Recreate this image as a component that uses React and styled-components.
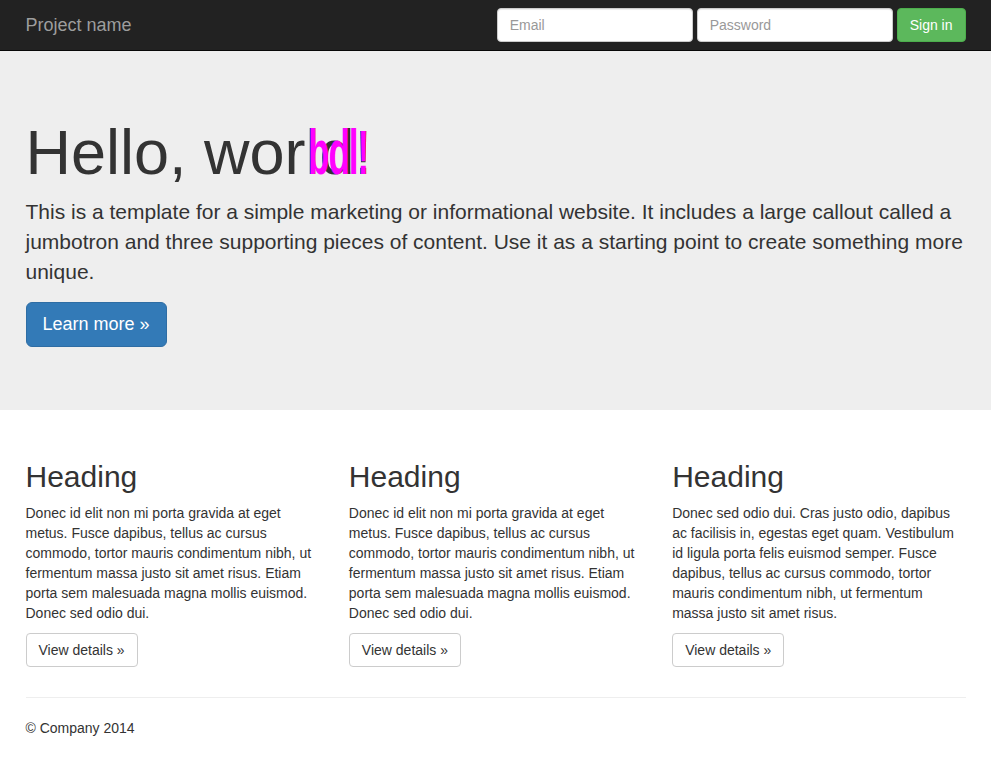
import React from "react";
import styled, { createGlobalStyle } from "styled-components";

const GlobalStyle = createGlobalStyle`
  * { box-sizing: border-box; }
  body {
    margin: 0;
    font-family: "Liberation Sans", Arial, sans-serif;
    font-size: 14px;
    line-height: 1.42857143;
    color: #333;
    background: #fff;
  }
`;

const Navbar = styled.nav`
  height: 51px;
  background: #222;
  border-bottom: 1px solid #080808;
`;

const Container = styled.div`
  max-width: 970px;
  margin: 0 auto;
  padding: 0 15px;
`;

const NavInner = styled(Container)`
  display: flex;
  align-items: center;
  justify-content: space-between;
  height: 50px;
`;

const Brand = styled.a`
  font-size: 18px;
  line-height: 20px;
  color: #9d9d9d;
  text-decoration: none;
`;

const SignInForm = styled.form`
  display: flex;
  gap: 4px;
`;

const Input = styled.input`
  width: 196px;
  height: 34px;
  padding: 6px 12px;
  font-family: inherit;
  font-size: 14px;
  color: #555;
  background: #fff;
  border: 1px solid #ccc;
  border-radius: 4px;
  box-shadow: inset 0 1px 1px rgba(0, 0, 0, 0.075);
  &::placeholder { color: #999; }
`;

const Button = styled.button`
  font-family: inherit;
  font-size: ${({ $lg }) => ($lg ? "18px" : "14px")};
  line-height: ${({ $lg }) => ($lg ? "23px" : "20px")};
  padding: ${({ $lg }) => ($lg ? "10px 16px" : "6px 12px")};
  border-radius: ${({ $lg }) => ($lg ? "6px" : "4px")};
  border: 1px solid;
  cursor: pointer;
  ${({ $variant }) =>
    $variant === "primary"
      ? "color:#fff;background:#337ab7;border-color:#2e6da4;"
      : $variant === "success"
      ? "color:#fff;background:#5cb85c;border-color:#4cae4c;"
      : "color:#333;background:#fff;border-color:#ccc;"}
`;

const Jumbotron = styled.div`
  background: #eee;
  padding: 47px 0 48px;
  margin-bottom: 30px;
`;

const Title = styled.h1`
  position: relative;
  font-size: 63px;
  font-weight: 500;
  line-height: 1.1;
  margin: 20px 0 10px;
  color: #333;
`;

/* the stray magenta glyphs drawn over the end of the title */
const Glitch = styled.span`
  position: absolute;
  left: 282px;
  top: 0;
  color: #ff00ff;
  font-weight: 700;
  letter-spacing: -2px;
  white-space: nowrap;
  transform: scaleX(0.56);
  transform-origin: left center;
  pointer-events: none;
`;

const Lead = styled.p`
  font-size: 21px;
  font-weight: 200;
  margin: 0 0 15px;
`;

const Row = styled.div`
  display: grid;
  grid-template-columns: repeat(3, 1fr);
  margin: 0 -15px;
`;

const Col = styled.div`
  padding: 0 15px;
`;

const Heading = styled.h2`
  font-size: 30px;
  font-weight: 500;
  line-height: 1.1;
  margin: 20px 0 10px;
`;

const Text = styled.p`
  margin: 0 0 10px;
`;

const Rule = styled.hr`
  margin: 20px 0;
  border: 0;
  border-top: 1px solid #eee;
`;

const Footer = styled.footer`
  p { margin: 0 0 10px; }
`;

const cols = [
  "Donec id elit non mi porta gravida at eget metus. Fusce dapibus, tellus ac cursus commodo, tortor mauris condimentum nibh, ut fermentum massa justo sit amet risus. Etiam porta sem malesuada magna mollis euismod. Donec sed odio dui.",
  "Donec id elit non mi porta gravida at eget metus. Fusce dapibus, tellus ac cursus commodo, tortor mauris condimentum nibh, ut fermentum massa justo sit amet risus. Etiam porta sem malesuada magna mollis euismod. Donec sed odio dui.",
  "Donec sed odio dui. Cras justo odio, dapibus ac facilisis in, egestas eget quam. Vestibulum id ligula porta felis euismod semper. Fusce dapibus, tellus ac cursus commodo, tortor mauris condimentum nibh, ut fermentum massa justo sit amet risus.",
];

export default function App() {
  return (
    <>
      <GlobalStyle />
      <Navbar>
        <NavInner>
          <Brand href="#">Project name</Brand>
          <SignInForm onSubmit={(e) => e.preventDefault()}>
            <Input type="text" placeholder="Email" />
            <Input type="password" placeholder="Password" />
            <Button $variant="success">Sign in</Button>
          </SignInForm>
        </NavInner>
      </Navbar>

      <Jumbotron>
        <Container>
          <Title>
            Hello, world!
            <Glitch aria-hidden="true">bdl!</Glitch>
          </Title>
          <Lead>
            This is a template for a simple marketing or informational website. It
            includes a large callout called a jumbotron and three supporting pieces
            of content. Use it as a starting point to create something more unique.
          </Lead>
          <Lead>
            <Button $lg $variant="primary">Learn more &raquo;</Button>
          </Lead>
        </Container>
      </Jumbotron>

      <Container>
        <Row>
          {cols.map((t, i) => (
            <Col key={i}>
              <Heading>Heading</Heading>
              <Text>{t}</Text>
              <Text>
                <Button>View details &raquo;</Button>
              </Text>
            </Col>
          ))}
        </Row>
        <Rule />
        <Footer>
          <p>&copy; Company 2014</p>
        </Footer>
      </Container>
    </>
  );
}
